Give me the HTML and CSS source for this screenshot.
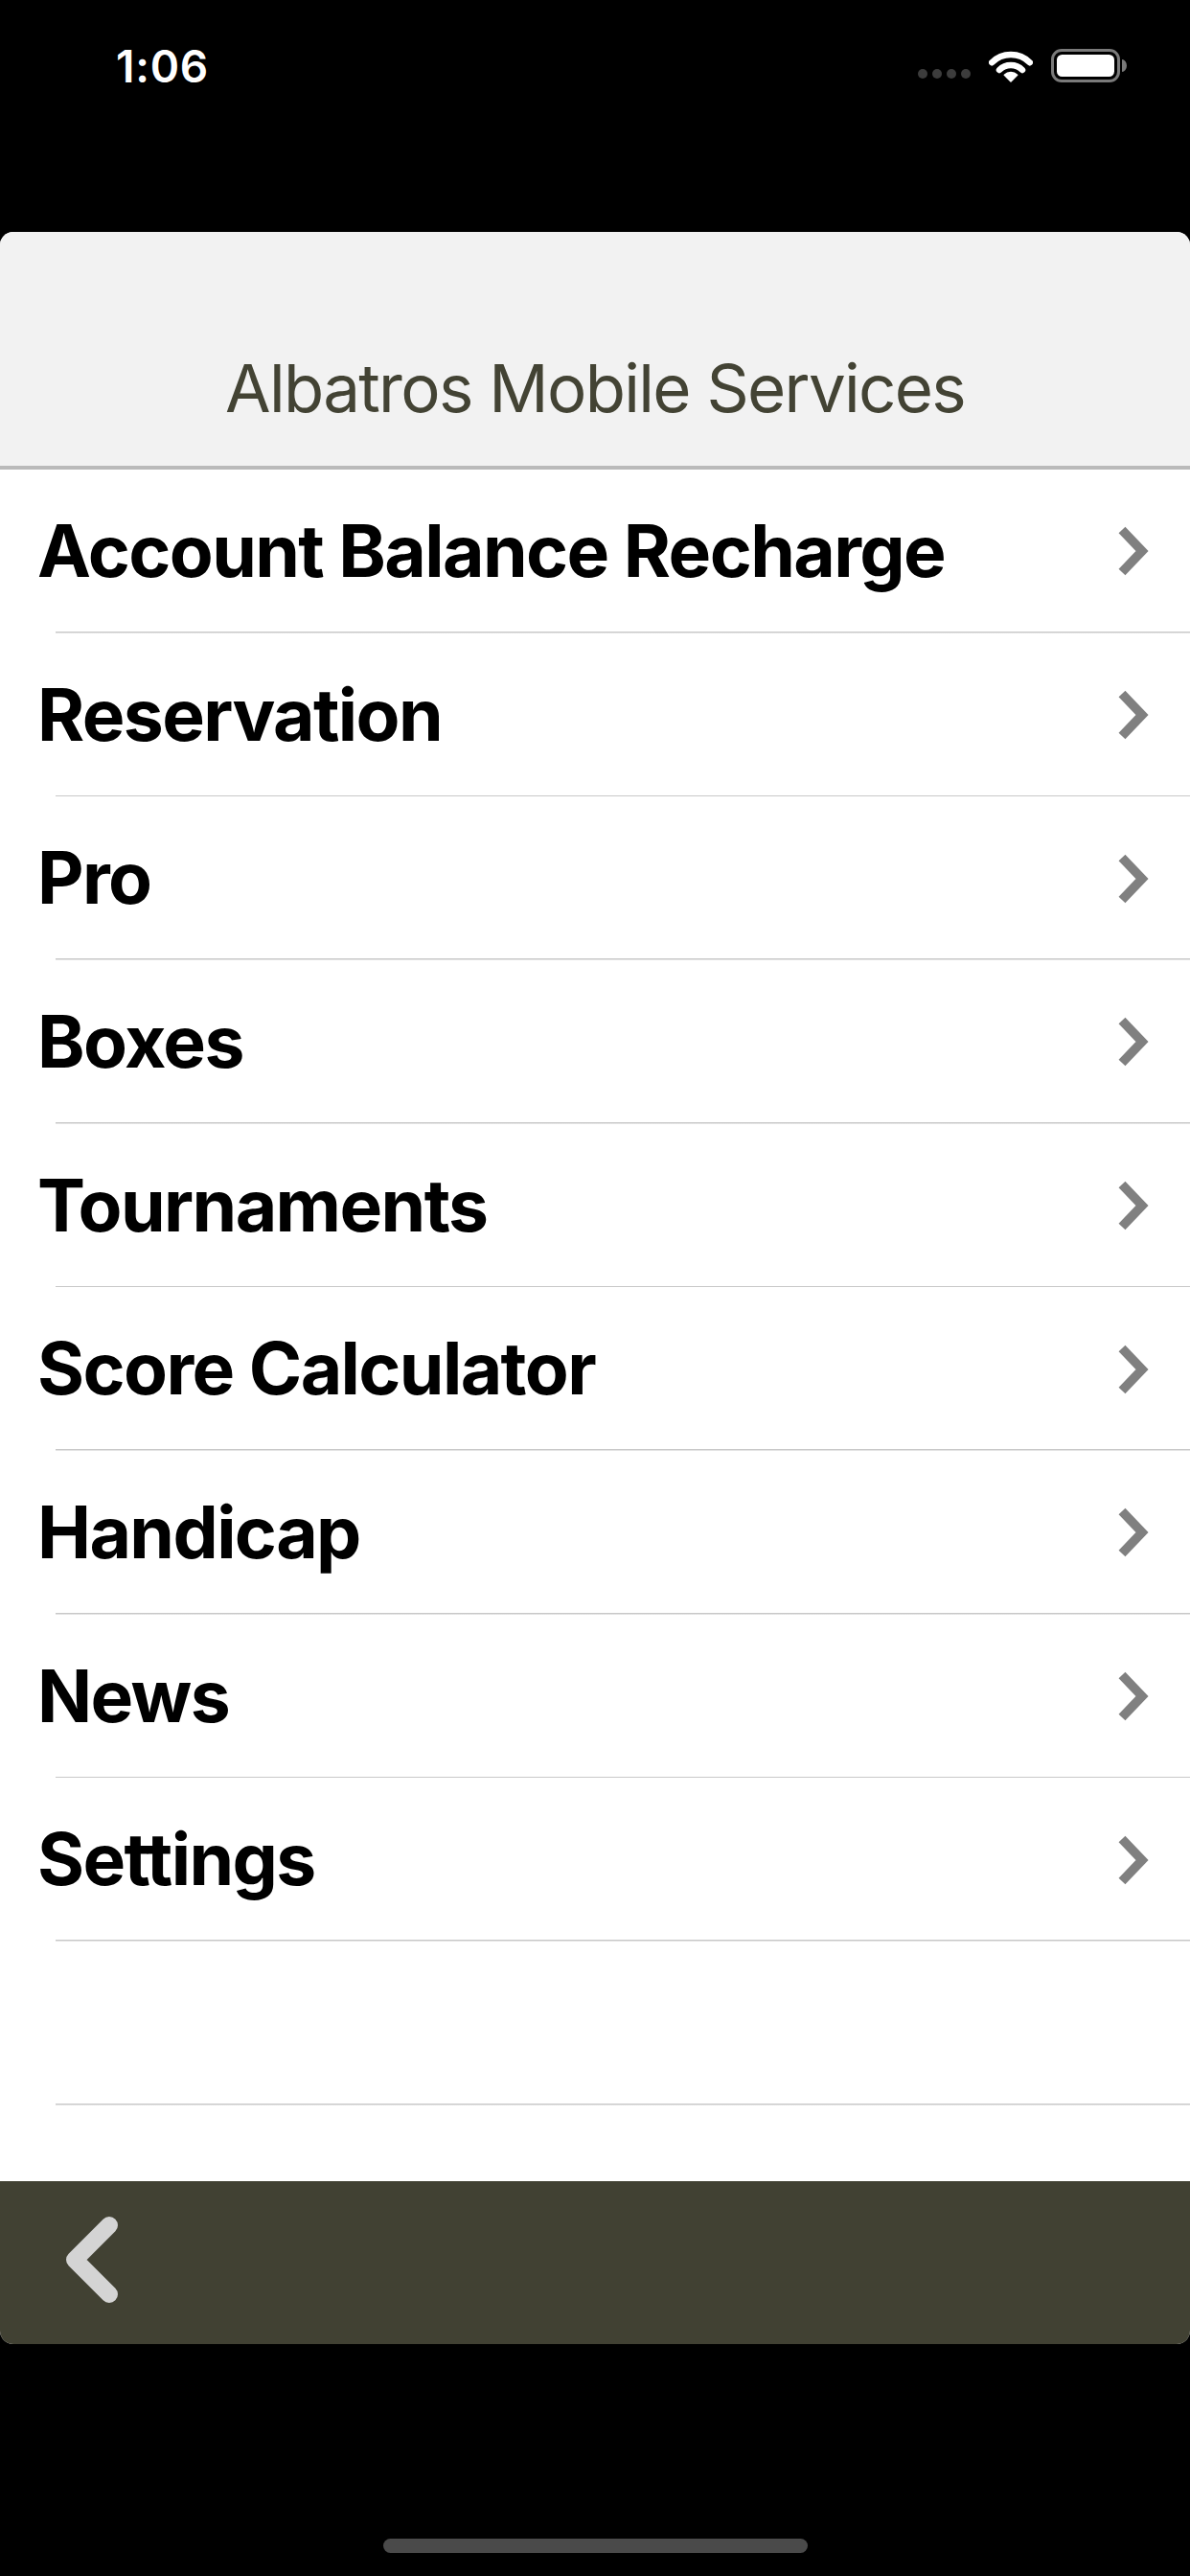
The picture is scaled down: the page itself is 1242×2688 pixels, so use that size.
FILE: index.html
```html
<!DOCTYPE html>
<html lang="en">
<head>
<meta charset="utf-8">
<title>Albatros Mobile Services</title>
<link rel="stylesheet" href="styles.css">
</head>
<body>
<div class="screen">
  <div class="statusbar">
    <span class="time">1:06</span>
    <div class="status-icons">
      <div class="signal"><span class="dot"></span><span class="dot"></span><span class="dot"></span><span class="dot"></span></div>
      <svg class="wifi" width="46" height="35" viewBox="0 0 46 35">
        <path d="M3.2 14.2 A28 28 0 0 1 42.8 14.2" fill="none" stroke="#fff" stroke-width="6.5" stroke-linecap="round"/>
        <path d="M11 22 A17 17 0 0 1 35 22" fill="none" stroke="#fff" stroke-width="6.5" stroke-linecap="round"/>
        <path d="M23 34 L16.3 27.3 A9.5 9.5 0 0 1 29.7 27.3 Z" fill="#fff" stroke="#fff" stroke-width="1.5" stroke-linejoin="round"/>
      </svg>
      <svg class="battery" width="80" height="36" viewBox="0 0 80 36">
        <rect x="1.5" y="1.5" width="69" height="32" rx="9.5" fill="none" stroke="#7a7a7a" stroke-width="3"/>
        <rect x="6" y="6" width="60" height="23" rx="5.5" fill="#fff"/>
        <path d="M74 11 A5 6.5 0 0 1 74 24 Z" fill="#7a7a7a"/>
      </svg>
    </div>
  </div>

  <main class="card">
    <header class="card-header">
      <h1 class="title">Albatros Mobile Services</h1>
    </header>
    <ul class="menu">
      <li class="row"><span class="label">Account Balance Recharge</span><svg class="chev" width="32" height="52" viewBox="0 0 32 52"><path d="M4 4 L25 26 L4 48" fill="none" stroke="#808080" stroke-width="9.5" stroke-linejoin="miter"/></svg></li>
      <li class="row"><span class="label">Reservation</span><svg class="chev" width="32" height="52" viewBox="0 0 32 52"><path d="M4 4 L25 26 L4 48" fill="none" stroke="#808080" stroke-width="9.5" stroke-linejoin="miter"/></svg></li>
      <li class="row"><span class="label">Pro</span><svg class="chev" width="32" height="52" viewBox="0 0 32 52"><path d="M4 4 L25 26 L4 48" fill="none" stroke="#808080" stroke-width="9.5" stroke-linejoin="miter"/></svg></li>
      <li class="row"><span class="label">Boxes</span><svg class="chev" width="32" height="52" viewBox="0 0 32 52"><path d="M4 4 L25 26 L4 48" fill="none" stroke="#808080" stroke-width="9.5" stroke-linejoin="miter"/></svg></li>
      <li class="row"><span class="label">Tournaments</span><svg class="chev" width="32" height="52" viewBox="0 0 32 52"><path d="M4 4 L25 26 L4 48" fill="none" stroke="#808080" stroke-width="9.5" stroke-linejoin="miter"/></svg></li>
      <li class="row"><span class="label">Score Calculator</span><svg class="chev" width="32" height="52" viewBox="0 0 32 52"><path d="M4 4 L25 26 L4 48" fill="none" stroke="#808080" stroke-width="9.5" stroke-linejoin="miter"/></svg></li>
      <li class="row"><span class="label">Handicap</span><svg class="chev" width="32" height="52" viewBox="0 0 32 52"><path d="M4 4 L25 26 L4 48" fill="none" stroke="#808080" stroke-width="9.5" stroke-linejoin="miter"/></svg></li>
      <li class="row"><span class="label">News</span><svg class="chev" width="32" height="52" viewBox="0 0 32 52"><path d="M4 4 L25 26 L4 48" fill="none" stroke="#808080" stroke-width="9.5" stroke-linejoin="miter"/></svg></li>
      <li class="row"><span class="label">Settings</span><svg class="chev" width="32" height="52" viewBox="0 0 32 52"><path d="M4 4 L25 26 L4 48" fill="none" stroke="#808080" stroke-width="9.5" stroke-linejoin="miter"/></svg></li>
      <li class="row row-empty"></li>
    </ul>
    <footer class="toolbar">
      <svg class="back" width="70" height="100" viewBox="0 0 70 100">
        <path d="M48 11 L12 47 L48 83" fill="none" stroke="#d4d4d4" stroke-width="18" stroke-linecap="round" stroke-linejoin="round"/>
      </svg>
    </footer>
  </main>

  <div class="home-area"><span class="home-indicator"></span></div>
</div>
</body>
</html>
```

FILE: styles.css
```css
* { box-sizing: border-box; }

html, body {
  margin: 0;
  padding: 0;
  background: #000;
}

body {
  width: 1242px;
  height: 2688px;
  overflow: hidden;
  font-family: Inter, "Noto Sans", "Liberation Sans", sans-serif;
}

.screen {
  display: flex;
  flex-direction: column;
  height: 2688px;
}

.statusbar {
  height: 137px;
  display: flex;
  align-items: center;
  justify-content: space-between;
  padding: 0 65px 0 121px;
  color: #fff;
}

.time {
  font-size: 46px;
  font-weight: 600;
  letter-spacing: 0.8px;
  line-height: 1;
}

.status-icons {
  display: flex;
  align-items: center;
  gap: 19px;
}

.signal {
  display: flex;
  gap: 5px;
  padding-top: 16px;
}

.dot {
  width: 10px;
  height: 10px;
  border-radius: 50%;
  background: #3c3c3c;
}

.wifi { display: block; margin-top: -1px; }
.battery { display: block; }

.card {
  margin-top: 105px;
  height: 2204px;
  display: flex;
  flex-direction: column;
  background: #fff;
  border-radius: 14px;
  overflow: hidden;
}

.card-header {
  height: 248px;
  flex: none;
  background: #f2f2f2;
  border-bottom: 4px solid #bababa;
  display: flex;
  align-items: flex-end;
  justify-content: center;
  padding-bottom: 39px;
}

.title {
  margin: 0;
  font-size: 69px;
  font-weight: 400;
  line-height: 84px;
  color: #434334;
  letter-spacing: -1.7px;
}

.menu {
  list-style: none;
  margin: 0;
  padding: 0;
  flex: 1;
}

.row {
  height: 170.67px;
  display: flex;
  align-items: center;
  justify-content: space-between;
  padding: 0 43px 0 39px;
  background: linear-gradient(#c8c8c8, #c8c8c8) no-repeat left 58px bottom / calc(100% - 58px) 1.5px;
}

.label {
  font-size: 75px;
  font-weight: 700;
  color: #000;
  letter-spacing: -1.6px;
  line-height: 1.21;
}

.chev { display: block; flex: none; }

.toolbar {
  height: 170px;
  flex: none;
  background: #414133;
  display: flex;
  align-items: center;
  padding-left: 66px;
}

.back { display: block; }

.home-area {
  flex: 1;
  display: flex;
  justify-content: center;
  align-items: flex-end;
  padding-bottom: 24px;
}

.home-indicator {
  width: 443px;
  height: 15px;
  border-radius: 8px;
  background: #4a4a4a;
}
```
